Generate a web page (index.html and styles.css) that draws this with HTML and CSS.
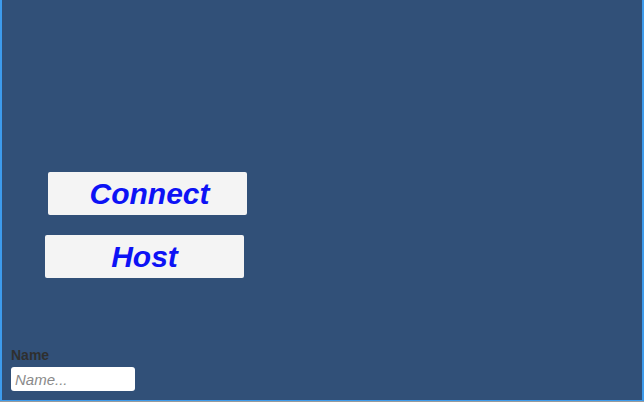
FILE: index.html
```html
<!DOCTYPE html>
<html lang="en">
<head>
    <meta charset="UTF-8">
    <title>Lobby</title>
    <link rel="stylesheet" href="styles.css">
</head>
<body>
    <div class="screen">
        <div class="menu">
            <button class="menu-button connect">Connect</button>
            <button class="menu-button host">Host</button>
        </div>
        <div class="name-field">
            <label for="player-name">Name</label>
            <input type="text" id="player-name" placeholder="Name...">
        </div>
    </div>
</body>
</html>
```

FILE: styles.css
```css
body {
    margin: 0;
    background-color: #9a9a9a;
    font-family: "Liberation Sans", Arial, sans-serif;
}

.screen {
    box-sizing: border-box;
    width: 644px;
    height: 401px;
    background-color: #315078;
    border-left: 2px solid #3d9bec;
    border-right: 2px solid #3d9bec;
    border-bottom: 1px solid #3d9bec;
    display: flex;
    flex-direction: column;
    justify-content: space-between;
}

.menu {
    display: flex;
    flex-direction: column;
    gap: 20px;
    padding-top: 172px;
}

.menu-button {
    width: 199px;
    height: 43px;
    padding: 0;
    border: none;
    border-radius: 2px;
    background-color: #f4f4f4;
    color: #0d12f5;
    font-family: "Liberation Sans", Arial, sans-serif;
    font-size: 30px;
    font-weight: bold;
    font-style: italic;
}

.connect {
    margin-left: 46px;
    padding-left: 4px;
}

.host {
    margin-left: 43px;
}

.name-field {
    display: flex;
    flex-direction: column;
    align-items: flex-start;
    gap: 4px;
    padding: 0 0 9px 9px;
}

label {
    color: #2f2f2f;
    font-size: 14px;
    font-weight: bold;
}

input {
    box-sizing: border-box;
    width: 124px;
    height: 24px;
    margin: 0;
    padding: 0 4px;
    border: none;
    border-radius: 3px;
    background-color: #ffffff;
    font-family: "Liberation Sans", Arial, sans-serif;
    font-size: 15px;
}

input::placeholder {
    color: #8a8a8a;
    font-style: italic;
}
```
